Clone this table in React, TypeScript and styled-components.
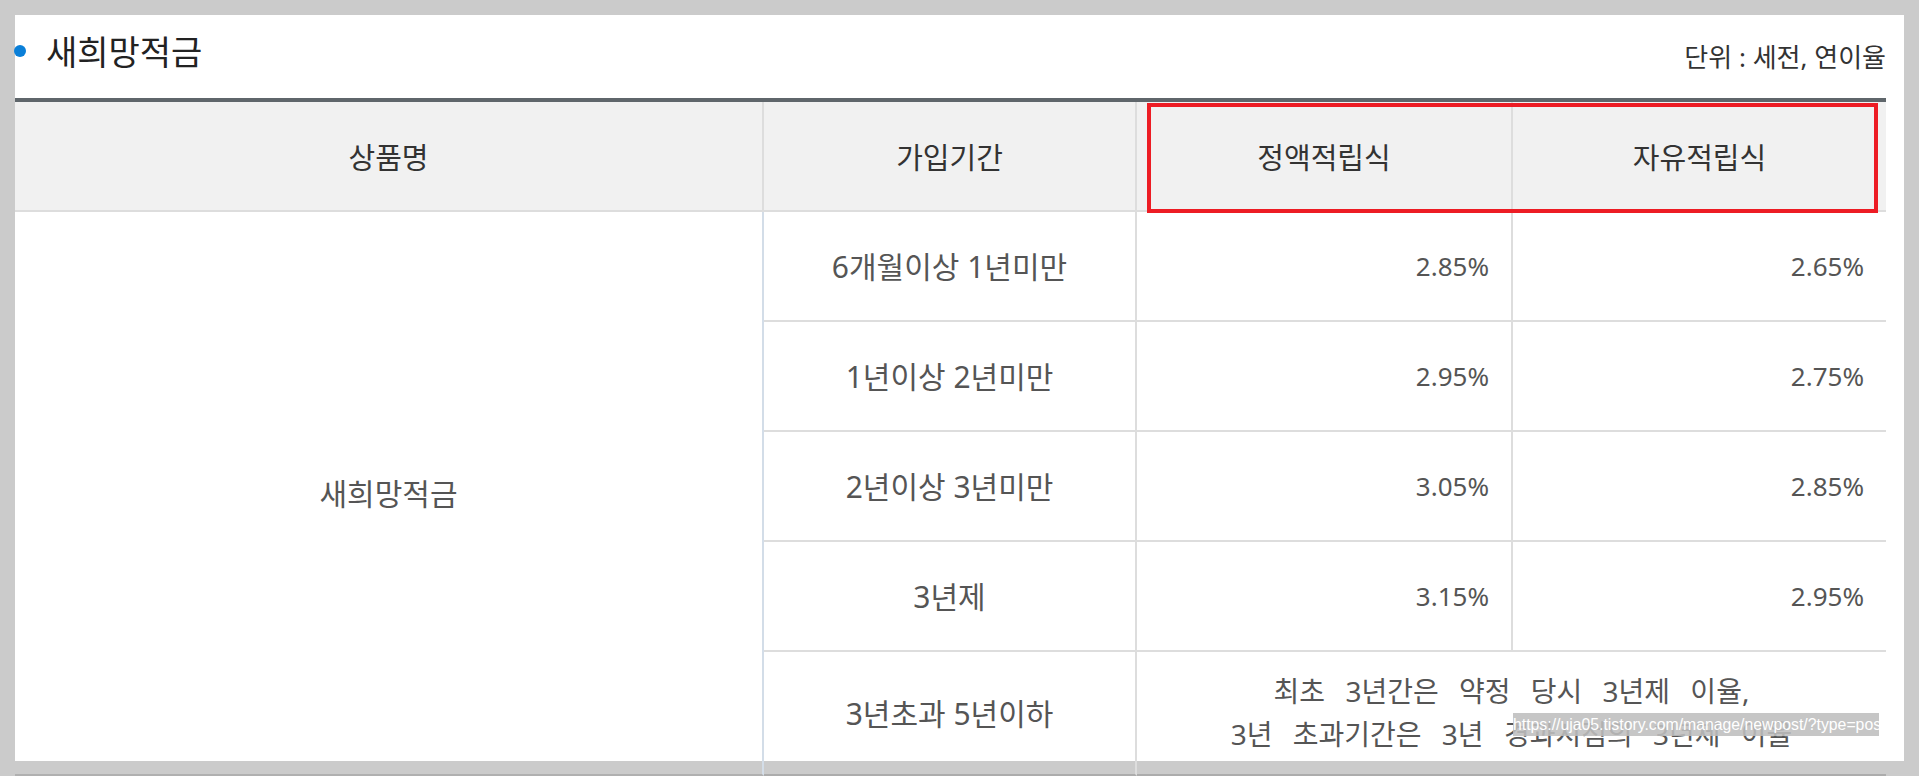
import React from "react";
import styled, { createGlobalStyle } from "styled-components";

const GlobalStyle = createGlobalStyle`
  html, body {
    margin: 0;
    padding: 0;
    background: #cbcbcb;
    overflow: hidden;
    font-family: "Noto Sans", "Noto Sans CJK KR", sans-serif;
  }
`;

const Page = styled.div`
  position: relative;
  height: 776px;
  box-sizing: border-box;
  padding: 15px 15px 0 15px;
`;

const Panel = styled.div`
  background: #fff;
  height: 746px;
  padding-right: 18px;
`;

const TitleBar = styled.div`
  display: flex;
  align-items: center;
  justify-content: space-between;
  height: 87px;
  padding-bottom: 10px;
  box-sizing: border-box;
  border-bottom: 4px solid #5f666b;
`;

const Title = styled.h2`
  display: flex;
  align-items: center;
  gap: 20px;
  margin: 0 0 0 -1px;
  font-size: 34px;
  font-weight: 400;
  color: #222;
  line-height: 40px;
  &::before {
    content: "";
    width: 12px;
    height: 12px;
    border-radius: 50%;
    background: #0a7fd8;
    margin-top: -2px;
  }
`;

const Unit = styled.span`
  font-size: 26px;
  color: #333;
  margin-top: 8px;
`;

const Table = styled.table`
  width: 100%;
  border-collapse: separate;
  border-spacing: 0;
  table-layout: fixed;
`;

const Th = styled.th<{ $last?: boolean }>`
  box-sizing: border-box;
  height: 110px;
  padding: 0;
  background: #f1f1f1;
  font-size: 29px;
  font-weight: 400;
  color: #333;
  border-bottom: 2px solid #dddddd;
  border-right: ${(p) => (p.$last ? "none" : "2px solid #dddddd")};
`;

const Td = styled.td<{ $num?: boolean; $last?: boolean; $h?: number }>`
  box-sizing: border-box;
  height: ${(p) => p.$h ?? 110}px;
  padding: 0 ${(p) => (p.$num ? "22px" : "0")} 0 0;
  text-align: ${(p) => (p.$num ? "right" : "center")};
  font-size: ${(p) => (p.$num ? 26 : 30)}px;
  line-height: 43px;
  color: #555;
  border-bottom: 2px solid #dddddd;
  border-right: ${(p) => (p.$last ? "none" : "2px solid #dddddd")};
`;

const NameCell = styled(Td)`
  border-right: 2px solid #d3dde8;
  border-bottom: 2px solid #b0b0b0;
`;

const LastRowCell = styled(Td)`
  border-bottom: 2px solid #acacac;
`;

const NoteCell = styled(LastRowCell)`
  font-size: 28px;
  word-spacing: 13px;
`;

const Highlight = styled.div`
  position: absolute;
  left: 1147px;
  top: 103px;
  width: 731px;
  height: 110px;
  box-sizing: border-box;
  border: 4px solid #ed1c24;
  pointer-events: none;
`;

const LinkTip = styled.div`
  position: absolute;
  left: 1513px;
  top: 713px;
  width: 366px;
  height: 23px;
  overflow: hidden;
  white-space: nowrap;
  background: rgba(190, 190, 190, 0.88);
  color: #fff;
  font-family: "Liberation Sans", Arial, sans-serif;
  font-size: 15.8px;
  line-height: 23px;
`;

const rows = [
  { period: "6개월이상 1년미만", fixed: "2.85%", free: "2.65%" },
  { period: "1년이상 2년미만", fixed: "2.95%", free: "2.75%" },
  { period: "2년이상 3년미만", fixed: "3.05%", free: "2.85%" },
  { period: "3년제", fixed: "3.15%", free: "2.95%" },
];

export default function App() {
  return (
    <>
      <GlobalStyle />
      <Page>
        <Panel>
          <TitleBar>
            <Title>새희망적금</Title>
            <Unit>단위 : 세전, 연이율</Unit>
          </TitleBar>
          <Table>
            <colgroup>
              <col style={{ width: 749 }} />
              <col style={{ width: 373 }} />
              <col style={{ width: 376 }} />
              <col style={{ width: 373 }} />
            </colgroup>
            <thead>
              <tr>
                <Th>상품명</Th>
                <Th>가입기간</Th>
                <Th>정액적립식</Th>
                <Th $last>자유적립식</Th>
              </tr>
            </thead>
            <tbody>
              {rows.map((r, i) => (
                <tr key={r.period}>
                  {i === 0 && <NameCell rowSpan={5}>새희망적금</NameCell>}
                  <Td>{r.period}</Td>
                  <Td $num>{r.fixed}</Td>
                  <Td $num $last>
                    {r.free}
                  </Td>
                </tr>
              ))}
              <tr>
                <LastRowCell $h={124}>3년초과 5년이하</LastRowCell>
                <NoteCell $h={124} colSpan={2} $last>
                  최초 3년간은 약정 당시 3년제 이율,
                  <br />
                  3년 초과기간은 3년 경과시점의 3년제 이율
                </NoteCell>
              </tr>
            </tbody>
          </Table>
        </Panel>
        <Highlight />
        <LinkTip>https://uja05.tistory.com/manage/newpost/?type=post</LinkTip>
      </Page>
    </>
  );
}
